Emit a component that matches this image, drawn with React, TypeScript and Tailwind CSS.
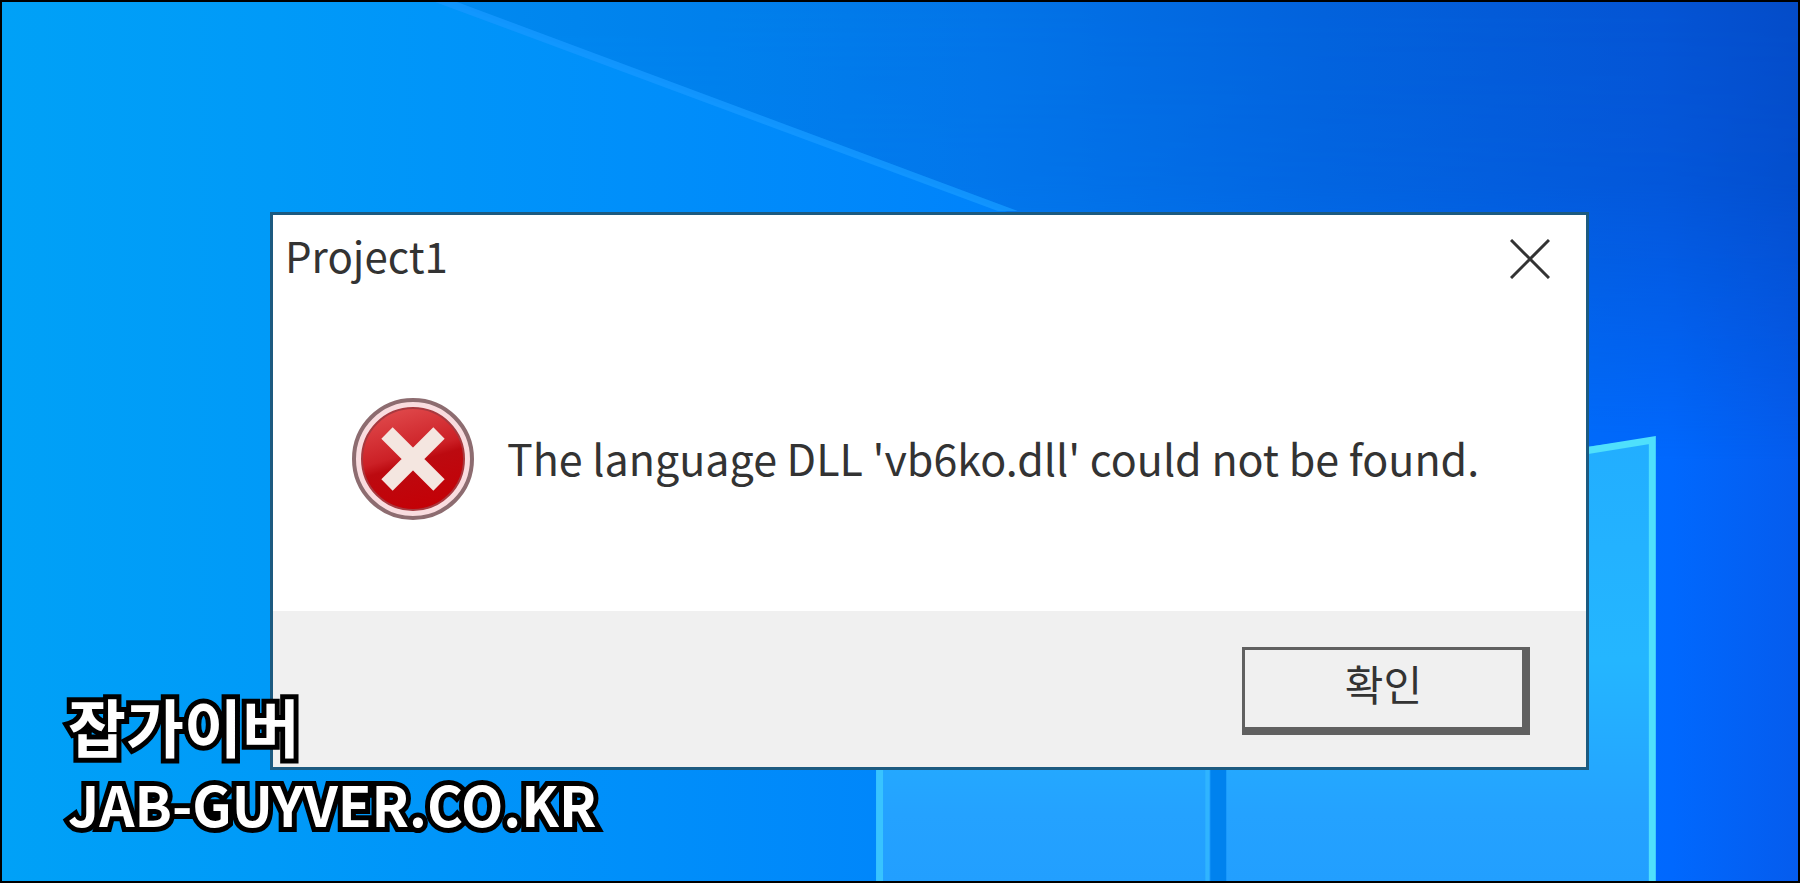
const SANS = "font-['Noto_Sans_CJK_KR',sans-serif]";

function Wallpaper() {
  return (
    <svg
      className="absolute inset-0 size-full"
      viewBox="0 0 1800 883"
      preserveAspectRatio="none"
      aria-hidden="true"
    >
      <defs>
        <linearGradient id="sky" x1="0" y1="0" x2="1" y2="0">
          <stop offset="0" stopColor="#00a1f7" />
          <stop offset="0.15" stopColor="#009af8" />
          <stop offset="0.35" stopColor="#008ffa" />
          <stop offset="0.6" stopColor="#0080fb" />
          <stop offset="0.85" stopColor="#006efc" />
          <stop offset="0.93" stopColor="#0068fe" />
          <stop offset="1" stopColor="#055cee" />
        </linearGradient>
        <linearGradient id="shade" x1="440" y1="0" x2="1800" y2="0" gradientUnits="userSpaceOnUse">
          <stop offset="0" stopColor="#008af0" />
          <stop offset="0.2" stopColor="#0080ec" />
          <stop offset="0.4" stopColor="#0274e8" />
          <stop offset="0.65" stopColor="#0262dc" />
          <stop offset="0.9" stopColor="#0454d4" />
          <stop offset="1" stopColor="#044cc8" />
        </linearGradient>
        <linearGradient id="fade" x1="0" y1="0" x2="0" y2="460" gradientUnits="userSpaceOnUse">
          <stop offset="0" stopColor="#fff" />
          <stop offset="0.4" stopColor="#fff" stopOpacity="0.85" />
          <stop offset="1" stopColor="#fff" stopOpacity="0" />
        </linearGradient>
        <mask id="shade-mask" maskUnits="userSpaceOnUse" x="0" y="0" width="1800" height="883">
          <rect width="1800" height="460" fill="url(#fade)" />
        </mask>
        <linearGradient id="pane" x1="0" y1="0" x2="0" y2="1">
          <stop offset="0" stopColor="#22aeff" />
          <stop offset="0.5" stopColor="#24b6ff" />
          <stop offset="0.85" stopColor="#24a2ff" />
          <stop offset="1" stopColor="#229fff" />
        </linearGradient>
      </defs>
      <rect width="1800" height="883" fill="url(#sky)" />
      <path d="M446 0 L1590 430 V460 H1800 V0 Z" fill="url(#shade)" mask="url(#shade-mask)" />
      <path d="M434 0 L456 0 L1018 210 L998 210 Z" fill="#1498ff" opacity="0.85" />
      <path d="M877 540 L1656 438 V883 H877 Z" fill="url(#pane)" />
      <rect x="1211" y="600" width="16" height="283" fill="#0082ee" />
      <rect x="1206" y="600" width="4" height="283" fill="#30b4ff" />
      <rect x="876" y="600" width="7" height="283" fill="#38c4ff" />
      <path d="M1580 452 L1654 440 V883" fill="none" stroke="#4fe0fc" strokeWidth="7" />
    </svg>
  );
}

function ErrorIcon() {
  return (
    <svg className="size-31 shrink-0" viewBox="0 0 124 124" aria-hidden="true">
      <defs>
        <linearGradient id="red" x1="0.3" y1="0" x2="0.6" y2="1">
          <stop offset="0" stopColor="#e04a4c" />
          <stop offset="0.45" stopColor="#cc2026" />
          <stop offset="0.55" stopColor="#bc0a10" />
          <stop offset="1" stopColor="#c40006" />
        </linearGradient>
      </defs>
      <circle cx="62" cy="62" r="59" fill="#f9dcdf" stroke="#8d6c70" strokeWidth="4" />
      <circle cx="62" cy="62" r="51" fill="url(#red)" stroke="#a8393f" strokeWidth="2" />
      <path d="M36 36 L88 88 M88 36 L36 88" stroke="#f4e6e0" strokeWidth="16" fill="none" />
    </svg>
  );
}

function MessageBox() {
  return (
    <section
      role="alertdialog"
      aria-labelledby="box-title"
      aria-describedby="box-text"
      className="relative w-full border-3 border-[#1c5a80] bg-white text-[#333]"
    >
      <header className="flex h-24 items-start justify-between pt-4 pr-9 pl-3">
        <h1 id="box-title" className="text-[42px] leading-12">
          Project1
        </h1>
        <button type="button" aria-label="Close" className="mt-2 size-10">
          <svg viewBox="0 0 40 40" className="size-10" fill="none" stroke="#333" strokeWidth="3">
            <path d="M1 1 L39 39 M39 1 L1 39" />
          </svg>
        </button>
      </header>
      <div className="flex h-75 items-center gap-8 pb-1 pl-[78px]">
        <ErrorIcon />
        <p id="box-text" className="pb-1 text-[43px] leading-12 whitespace-nowrap">
          The language DLL 'vb6ko.dll' could not be found.
        </p>
      </div>
      <footer className="flex h-39 items-start justify-end bg-[#f0f0f0] pt-9 pr-14">
        <button
          type="button"
          className="h-22 w-72 border-t-3 border-r-8 border-b-8 border-l-3 border-[#606060] bg-[#f0f0f0] pb-3 text-[42px] leading-12"
        >
          확인
        </button>
      </footer>
    </section>
  );
}

export default function App() {
  return (
    <main className={`relative min-h-screen overflow-hidden border-2 border-black bg-[#0090fb] ${SANS}`}>
      <Wallpaper />
      <div className="pt-[210px] pr-[209px] pl-[268px]">
        <MessageBox />
      </div>
      <div className="absolute bottom-10 left-[66px] font-bold text-white [-webkit-text-stroke:10px_#000] [paint-order:stroke] [stroke-linejoin:round]">
        <p className="text-[63px] leading-20">잡가이버</p>
        <p className="text-[55px] leading-19">JAB-GUYVER.CO.KR</p>
      </div>
    </main>
  );
}
